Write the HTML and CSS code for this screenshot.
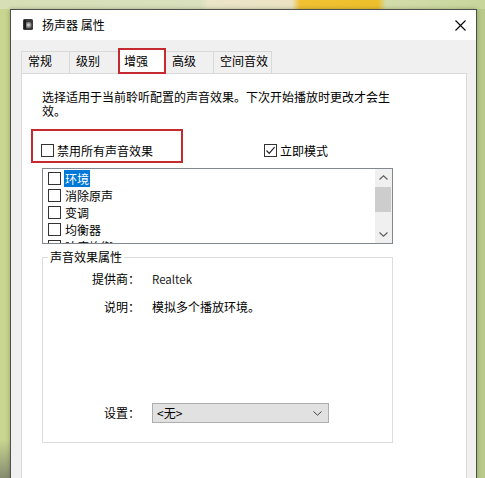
FILE: index.html
```html
<!DOCTYPE html>
<html lang="zh-CN">
<head>
<meta charset="utf-8">
<title>扬声器 属性</title>
<link rel="stylesheet" href="styles.css">
</head>
<body>
<div class="window">
  <div class="titlebar">
    <svg class="app-icon" width="10" height="11" viewBox="0 0 10 11">
      <rect x="0" y="0" width="10" height="11" rx="1.5" fill="#3b3b3b"/>
      <circle cx="5.5" cy="6" r="3" fill="#8a8a8a"/>
      <circle cx="5.5" cy="6" r="1.4" fill="#d0d0d0"/>
      <rect x="1" y="1" width="2" height="9" fill="#1c1c1c"/>
    </svg>
    <span class="title">扬声器 属性</span>
    <svg class="close" width="11" height="11" viewBox="0 0 11 11">
      <path d="M0.5 0.5 L10.5 10.5 M10.5 0.5 L0.5 10.5" stroke="#000" stroke-width="1.1" fill="none"/>
    </svg>
  </div>
  <div class="client">
    <div class="tabs">
      <div class="tab tab-w48">常规</div>
      <div class="tab tab-w49">级别</div>
      <div class="tab tab-active">增强</div>
      <div class="tab tab-w47">高级</div>
      <div class="tab tab-w59 tab-last">空间音效</div>
    </div>
    <div class="panel">
      <p class="desc">选择适用于当前聆听配置的声音效果。下次开始播放时更改才会生效。</p>
      <div class="options">
        <div class="mark-box">
          <div class="check"><span class="box"></span><span>禁用所有声音效果</span></div>
        </div>
        <div class="check instant">
          <span class="box">
            <svg width="11" height="11" viewBox="0 0 11 11"><path d="M1.5 5.5 L4.2 8.3 L9.6 2.2" stroke="#222" stroke-width="1.2" fill="none"/></svg>
          </span><span>立即模式</span>
        </div>
      </div>
      <div class="listbox">
        <div class="items">
          <div class="item"><span class="box"></span><span class="item-text selected">环境</span></div>
          <div class="item"><span class="box"></span><span class="item-text">消除原声</span></div>
          <div class="item"><span class="box"></span><span class="item-text">变调</span></div>
          <div class="item"><span class="box"></span><span class="item-text">均衡器</span></div>
          <div class="item"><span class="box"></span><span class="item-text">响度均衡</span></div>
        </div>
        <div class="scrollbar">
          <div class="sb-btn">
            <svg width="9" height="5" viewBox="0 0 9 5"><path d="M0.5 4.5 L4.5 0.8 L8.5 4.5" stroke="#606060" stroke-width="1.2" fill="none"/></svg>
          </div>
          <div class="sb-thumb"></div>
          <div class="sb-track"></div>
          <div class="sb-btn">
            <svg width="9" height="5" viewBox="0 0 9 5"><path d="M0.5 0.5 L4.5 4.2 L8.5 0.5" stroke="#606060" stroke-width="1.2" fill="none"/></svg>
          </div>
        </div>
      </div>
      <fieldset class="group">
        <legend>声音效果属性</legend>
        <div class="prop">
          <span class="prop-label">提供商：</span><span class="prop-value latin">Realtek</span>
        </div>
        <div class="prop prop-gap">
          <span class="prop-label">说明：</span><span class="prop-value">模拟多个播放环境。</span>
        </div>
        <div class="prop prop-setting">
          <span class="prop-label">设置：</span>
          <div class="combo">
            <span>&lt;无&gt;</span>
            <svg width="9" height="5" viewBox="0 0 9 5"><path d="M0.5 0.5 L4.5 4.2 L8.5 0.5" stroke="#444" stroke-width="1" fill="none"/></svg>
          </div>
        </div>
      </fieldset>
    </div>
  </div>
</div>
</body>
</html>
```

FILE: styles.css
```css
* { box-sizing: border-box; }

html, body {
  margin: 0;
  padding: 0;
}

body {
  height: 478px;
  overflow: hidden;
  font-family: "Noto Sans CJK SC", "Noto Sans", sans-serif;
  font-size: 12px;
  color: #000;
  background:
    linear-gradient(90deg, #d6dfb6 0, #d9e0bd 200px, #ebe5c9 208px, #ece3c3 292px, #f0c132 300px, #eebf2c 378px, #d3dcaa 386px, #c8d69c 100%) top left / 100% 9px no-repeat,
    linear-gradient(180deg, rgba(0,0,0,0) 440px, rgba(90,90,90,0.6) 478px) left top / 10px 100% no-repeat,
    linear-gradient(90deg, #c8d690 0, #c6d48f 10px, #b9cb8b 477px, #b8c98a 100%);
}

.window {
  margin: 9px 0 0 10px;
  width: 467px;
  height: 480px;
  border: 1px solid #4f4f4f;
  background: #f0f0f0;
  box-shadow: 0 0 4px rgba(40, 60, 20, 0.35);
}

.titlebar {
  height: 30px;
  background: #fff;
  display: flex;
  align-items: center;
  padding: 0 10px 1px 12px;
}

.app-icon { flex: none; }

.title {
  margin-left: 9px;
  line-height: 16px;
  flex: 1;
}

.close { flex: none; margin-top: 1px; }

.client {
  padding: 8px 9px 0 10px;
}

.tabs {
  display: flex;
  align-items: flex-end;
  height: 25px;
}

.tab {
  height: 22px;
  border-top: 1px solid #d9d9d9;
  border-left: 1px solid #d9d9d9;
  padding-left: 6px;
  line-height: 18px;
  background: #f0f0f0;
}

.tab-w48 { width: 48px; }
.tab-w49 { width: 49px; }
.tab-w47 { width: 47px; }
.tab-w59 { width: 59px; }
.tab-last { border-right: 1px solid #d9d9d9; }

.tab-active {
  width: 48px;
  height: 26px;
  margin-bottom: -1px;
  border: 2px solid #c42a30;
  background: #fff;
  padding: 2px 0 0 4px;
  position: relative;
  z-index: 1;
}

.tab-active + .tab { border-left: none; }

.panel {
  background: #fff;
  border: 1px solid #d9d9d9;
  height: 420px;
  padding: 16px 0 0 20px;
}

.desc {
  margin: 0;
  width: 350px;
  line-height: 14px;
}

.options {
  display: flex;
  align-items: flex-start;
  margin: 11px 0 0 -11px;
}

.mark-box {
  width: 152px;
  height: 34px;
  border: 2px solid #c42a30;
  padding: 13px 0 0 8px;
}

.check {
  display: flex;
  align-items: center;
  height: 13px;
  line-height: 13px;
  gap: 3px;
  white-space: nowrap;
}

.instant {
  margin: 15px 0 0 81px;
}

.box {
  flex: none;
  width: 13px;
  height: 13px;
  border: 1px solid #333;
  background: #fff;
  display: flex;
  align-items: center;
  justify-content: center;
}

.listbox {
  margin-top: 5px;
  width: 351px;
  height: 76px;
  border: 1px solid #828790;
  display: flex;
}

.items {
  flex: 1;
  overflow: hidden;
  padding: 1px 0 0 5px;
}

.item {
  height: 17px;
  display: flex;
  align-items: center;
  white-space: nowrap;
}

.item-text {
  margin-left: 3px;
  padding: 0 1px;
  line-height: 17px;
  height: 17px;
}

.selected {
  background: #0078d7;
  color: #fff;
}

.scrollbar {
  width: 17px;
  flex: none;
  background: #f0f0f0;
  display: flex;
  flex-direction: column;
}

.sb-btn {
  height: 17px;
  display: flex;
  align-items: center;
  justify-content: center;
  flex: none;
}

.sb-thumb {
  height: 25px;
  margin: 1px 1px 0 0;
  background: #cdcdcd;
  flex: none;
}

.sb-track { flex: 1; }

.group {
  margin: 6px 0 0 0;
  padding: 0 0 19px 0;
  width: 351px;
  border: 1px solid #dcdcdc;
  min-width: 0;
}

.group legend {
  margin-left: 5px;
  padding: 0 2px;
  line-height: 14px;
}

.prop {
  display: flex;
  align-items: center;
  height: 16px;
  margin-top: 7px;
  line-height: 16px;
}

.prop-gap { margin-top: 12px; }

.prop-setting {
  margin-top: 88px;
  height: 20px;
}

.prop-label {
  width: 97px;
  text-align: right;
  flex: none;
}

.prop-value {
  margin-left: 12px;
  white-space: nowrap;
}

.latin {
  font-size: 11.5px;
  color: #222;
}

.combo {
  margin-left: 12px;
  width: 177px;
  height: 20px;
  background: #e1e1e1;
  border: 1px solid #adadad;
  display: flex;
  align-items: center;
  justify-content: space-between;
  padding: 0 6px 0 4px;
  line-height: 18px;
}
```
